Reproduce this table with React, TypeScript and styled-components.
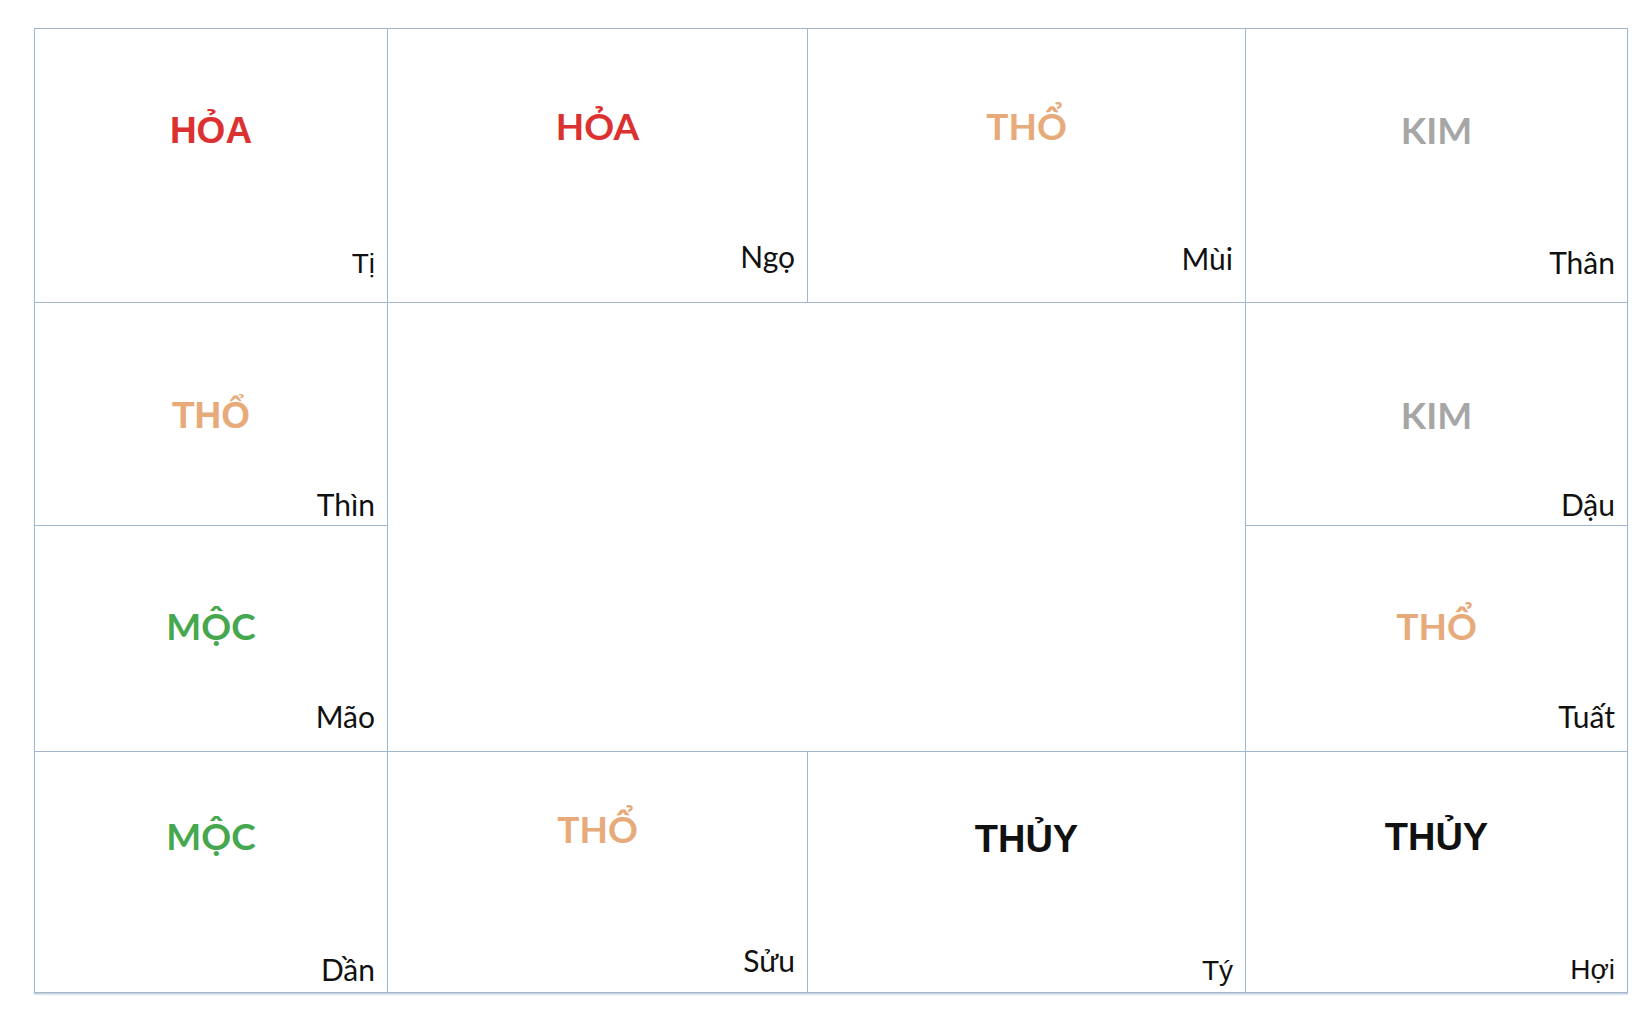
import React from 'react';
import styled, { createGlobalStyle } from 'styled-components';

type Face = 'soft' | 'grotesk';
type Tone = 'fire' | 'earth' | 'metal' | 'wood' | 'water';

interface Palace {
  branch: string;
  element: string;
  tone: Tone;
  face: Face;
  labelFace: Face;
  col: number;
  row: number;
  // distance from cell top to the element name line box
  top: number;
  // distance from cell bottom to the branch label line box
  bottom: number;
}

const fonts: Record<Face, string> = {
  soft: '"Lato", "Open Sans", "Noto Sans", sans-serif',
  grotesk: '"Liberation Sans", Arial, sans-serif',
};

const tones: Record<Tone, string> = {
  fire: '#db3131',
  earth: '#e7aa7b',
  metal: '#a6a6a6',
  wood: '#45a84f',
  water: '#111111',
};

const lineColor = '#a2b6cd';

const palaces: Palace[] = [
  { branch: 'Tị', element: 'HỎA', tone: 'fire', face: 'grotesk', labelFace: 'grotesk', col: 1, row: 1, top: 83, bottom: 24 },
  { branch: 'Ngọ', element: 'HỎA', tone: 'fire', face: 'soft', labelFace: 'soft', col: 2, row: 1, top: 78, bottom: 31 },
  { branch: 'Mùi', element: 'THỔ', tone: 'earth', face: 'soft', labelFace: 'soft', col: 3, row: 1, top: 78, bottom: 29 },
  { branch: 'Thân', element: 'KIM', tone: 'metal', face: 'soft', labelFace: 'soft', col: 4, row: 1, top: 82, bottom: 25 },
  { branch: 'Thìn', element: 'THỔ', tone: 'earth', face: 'grotesk', labelFace: 'soft', col: 1, row: 2, top: 94, bottom: 6 },
  { branch: 'Dậu', element: 'KIM', tone: 'metal', face: 'soft', labelFace: 'soft', col: 4, row: 2, top: 93, bottom: 6 },
  { branch: 'Mão', element: 'MỘC', tone: 'wood', face: 'soft', labelFace: 'soft', col: 1, row: 3, top: 81, bottom: 20 },
  { branch: 'Tuất', element: 'THỔ', tone: 'earth', face: 'soft', labelFace: 'soft', col: 4, row: 3, top: 81, bottom: 20 },
  { branch: 'Dần', element: 'MỘC', tone: 'wood', face: 'soft', labelFace: 'soft', col: 1, row: 4, top: 65, bottom: 8 },
  { branch: 'Sửu', element: 'THỔ', tone: 'earth', face: 'soft', labelFace: 'soft', col: 2, row: 4, top: 58, bottom: 17 },
  { branch: 'Tý', element: 'THỦY', tone: 'water', face: 'grotesk', labelFace: 'grotesk', col: 3, row: 4, top: 68, bottom: 7 },
  { branch: 'Hợi', element: 'THỦY', tone: 'water', face: 'grotesk', labelFace: 'grotesk', col: 4, row: 4, top: 66, bottom: 8 },
];

const GlobalStyle = createGlobalStyle`
  html, body {
    margin: 0;
    padding: 0;
    background: #ffffff;
  }
  body {
    font-family: "Lato", "Open Sans", sans-serif;
    color: #111111;
  }
`;

const Page = styled.main`
  width: 1652px;
  height: 1024px;
  box-sizing: border-box;
  padding: 28px 0 0 34px;
  background: #ffffff;
`;

const Board = styled.section`
  display: grid;
  grid-template-columns: 352px 419px 437px 381px;
  grid-template-rows: 273px 222px 225px 240px;
  gap: 1px;
  padding: 1px;
  width: max-content;
  background: ${lineColor};
  box-shadow: 0 1px 0 #c6d3de, 0 2px 1px rgba(190, 205, 215, 0.5);
`;

const Cell = styled.div<{ $col: number; $row: number; $top: number; $bottom: number }>`
  grid-column: ${(p) => p.$col};
  grid-row: ${(p) => p.$row};
  display: flex;
  flex-direction: column;
  box-sizing: border-box;
  padding: ${(p) => p.$top}px 12px ${(p) => p.$bottom}px 12px;
  background: #ffffff;
`;

const Center = styled.div`
  grid-column: 2 / 4;
  grid-row: 2 / 4;
  background: #ffffff;
`;

const Element = styled.span<{ $tone: Tone; $face: Face }>`
  display: block;
  text-align: center;
  font-family: ${(p) => fonts[p.$face]};
  font-weight: 700;
  font-size: ${(p) => (p.$tone === 'water' ? 38 : 37)}px;
  line-height: 1;
  color: ${(p) => tones[p.$tone]};
  white-space: nowrap;
`;

const Branch = styled.span<{ $face: Face }>`
  display: block;
  margin-top: auto;
  text-align: right;
  font-family: ${(p) => fonts[p.$face]};
  font-weight: 400;
  font-size: ${(p) => (p.$face === 'grotesk' ? 28 : 30)}px;
  line-height: 1;
  color: #111111;
  white-space: nowrap;
`;

const App = () => (
  <>
    <GlobalStyle />
    <Page>
      <Board>
        {palaces.map((p) => (
          <Cell key={p.branch} $col={p.col} $row={p.row} $top={p.top} $bottom={p.bottom}>
            <Element $tone={p.tone} $face={p.face}>
              {p.element}
            </Element>
            <Branch $face={p.labelFace}>{p.branch}</Branch>
          </Cell>
        ))}
        <Center />
      </Board>
    </Page>
  </>
);

export default App;
